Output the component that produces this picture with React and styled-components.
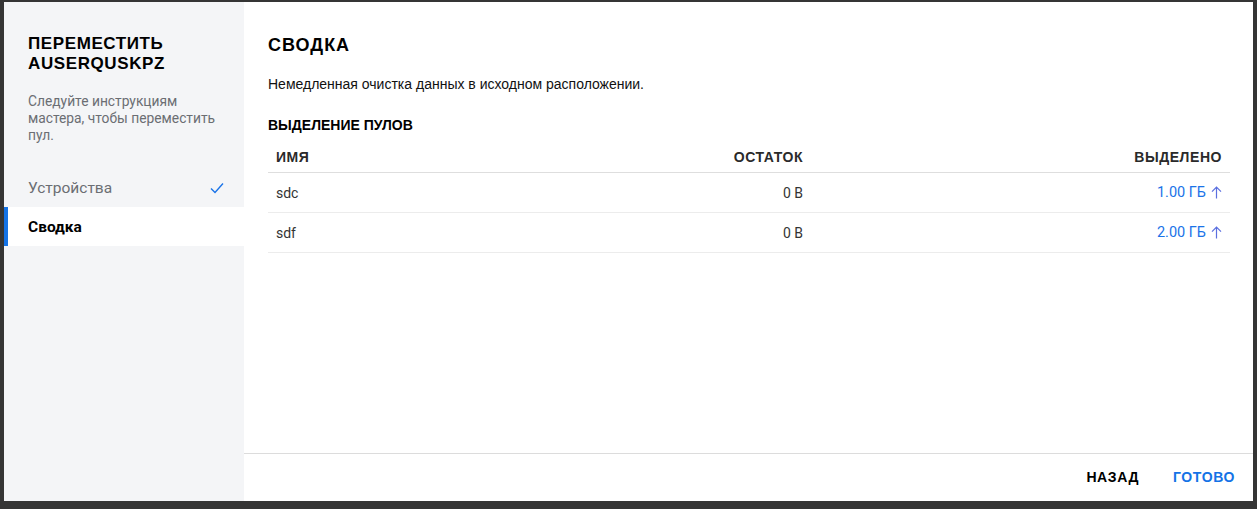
import React from 'react'
import styled, { createGlobalStyle } from 'styled-components'

const GlobalStyle = createGlobalStyle`
  html, body {
    margin: 0;
    padding: 0;
    background: #353535;
    font-family: Roboto, "Liberation Sans", Arial, sans-serif;
  }
`

const steps = [
  { label: 'Устройства', done: true },
  { label: 'Сводка', active: true },
]

const pools = [
  { name: 'sdc', remain: '0 B', alloc: '1.00 ГБ' },
  { name: 'sdf', remain: '0 B', alloc: '2.00 ГБ' },
]

const CheckIcon = () => (
  <svg width="14" height="12" viewBox="0 0 14 12" fill="none">
    <path d="M1 6.5l4 4L13 1.5" stroke="#1a73e8" strokeWidth="1.4" />
  </svg>
)

const ArrowUp = () => (
  <svg width="11" height="13" viewBox="0 0 11 13" fill="none">
    <path d="M5.5 12.5V1.2M1 5.7l4.5-4.5 4.5 4.5" stroke="#5b6fe0" strokeWidth="1.2" />
  </svg>
)

const App = () => {
  return (
    <>
      <GlobalStyle />
      <Dialog>
        <Sidebar>
          <SideTitle>ПЕРЕМЕСТИТЬ AUSERQUSKPZ</SideTitle>
          <SideText>Следуйте инструкциям мастера, чтобы переместить пул.</SideText>
          <StepList>
            {steps.map(step => (
              <Step key={step.label} active={step.active}>
                <span>{step.label}</span>
                {step.done && <CheckIcon />}
              </Step>
            ))}
          </StepList>
        </Sidebar>
        <Main>
          <Content>
            <Title>СВОДКА</Title>
            <Description>Немедленная очистка данных в исходном расположении.</Description>
            <SectionTitle>ВЫДЕЛЕНИЕ ПУЛОВ</SectionTitle>
            <Table>
              <HeadRow>
                <HeadCell>ИМЯ</HeadCell>
                <HeadCell right>ОСТАТОК</HeadCell>
                <HeadCell right>ВЫДЕЛЕНО</HeadCell>
              </HeadRow>
              {pools.map(pool => (
                <Row key={pool.name}>
                  <Cell>{pool.name}</Cell>
                  <Cell right>{pool.remain}</Cell>
                  <Cell right>
                    <AllocLink>
                      {pool.alloc}
                      <ArrowUp />
                    </AllocLink>
                  </Cell>
                </Row>
              ))}
            </Table>
          </Content>
          <Footer>
            <FooterButton>НАЗАД</FooterButton>
            <FooterButton primary>ГОТОВО</FooterButton>
          </Footer>
        </Main>
      </Dialog>
    </>
  )
}

const Dialog = styled.div`
  display: flex;
  width: 1249px;
  height: 499px;
  margin: 2px 4px 8px 4px;
  background: #fff;
`

const Sidebar = styled.aside`
  width: 240px;
  flex-shrink: 0;
  background: #f4f5f7;
  padding-top: 32px;
  box-sizing: border-box;
`

const SideTitle = styled.h2`
  margin: 0 24px;
  font-family: "Liberation Sans", Arial, sans-serif;
  font-weight: 700;
  font-size: 17px;
  line-height: 20px;
  color: #000;
  letter-spacing: 0.6px;
`

const SideText = styled.p`
  margin: 19px 24px 0 24px;
  font-size: 13.8px;
  line-height: 17px;
  color: #6b6e73;
`

const StepList = styled.div`
  margin-top: 24px;
  display: flex;
  flex-direction: column;
`

const Step = styled.div`
  display: flex;
  align-items: center;
  justify-content: space-between;
  height: 39px;
  padding: 0 20px 0 24px;
  box-sizing: border-box;
  font-size: 15.5px;
  color: ${props => (props.active ? '#000' : '#6b6e73')};
  font-weight: ${props => (props.active ? 700 : 400)};
  background: ${props => (props.active ? '#fff' : 'transparent')};
  box-shadow: ${props => (props.active ? 'inset 4px 0 0 #1473e6' : 'none')};
`

const Main = styled.main`
  flex: 1;
  display: flex;
  flex-direction: column;
  min-width: 0;
`

const Content = styled.div`
  flex: 1;
  padding: 32px 23px 0 24px;
`

const Title = styled.h1`
  margin: 0;
  font-family: "Liberation Sans", Arial, sans-serif;
  font-size: 18px;
  line-height: 22px;
  font-weight: 700;
  letter-spacing: 1px;
  color: #000;
`

const Description = styled.p`
  margin: 20px 0 0 0;
  font-family: "Liberation Sans", Arial, sans-serif;
  font-size: 14px;
  line-height: 17px;
  color: #111;
`

const SectionTitle = styled.h3`
  margin: 24px 0 0 0;
  font-family: "Liberation Sans", Arial, sans-serif;
  font-size: 14px;
  line-height: 17px;
  font-weight: 700;
  color: #000;
`

const Table = styled.div`
  margin-top: 7px;
  display: flex;
  flex-direction: column;
`

const HeadRow = styled.div`
  display: grid;
  grid-template-columns: 343px 200px 1fr;
  height: 32px;
  box-sizing: border-box;
  align-items: center;
  border-bottom: 1px solid #dedede;
`

const Row = styled(HeadRow)`
  height: 40px;
  border-bottom: 1px solid #ececec;
`

const HeadCell = styled.div`
  padding: 0 8px;
  text-align: ${props => (props.right ? 'right' : 'left')};
  font-family: "Liberation Sans", Arial, sans-serif;
  font-size: 14px;
  font-weight: 700;
  letter-spacing: 0.55px;
  color: #2a2a2a;
`

const Cell = styled.div`
  padding: 0 8px;
  text-align: ${props => (props.right ? 'right' : 'left')};
  font-size: 14px;
  color: #333;
`

const AllocLink = styled.span`
  display: inline-flex;
  align-items: center;
  gap: 5px;
  font-size: 14.5px;
  color: #1a73e8;
`

const Footer = styled.footer`
  height: 48px;
  box-sizing: border-box;
  display: flex;
  align-items: center;
  justify-content: flex-end;
  gap: 34px;
  padding: 0 18px 2px 0;
  border-top: 1px solid #dcdcdc;
`

const FooterButton = styled.button`
  border: none;
  background: none;
  padding: 0;
  font-family: "Liberation Sans", Arial, sans-serif;
  font-size: 14px;
  font-weight: 700;
  letter-spacing: 0.6px;
  color: ${props => (props.primary ? '#1473e6' : '#000')};
  cursor: pointer;
`

export default App
